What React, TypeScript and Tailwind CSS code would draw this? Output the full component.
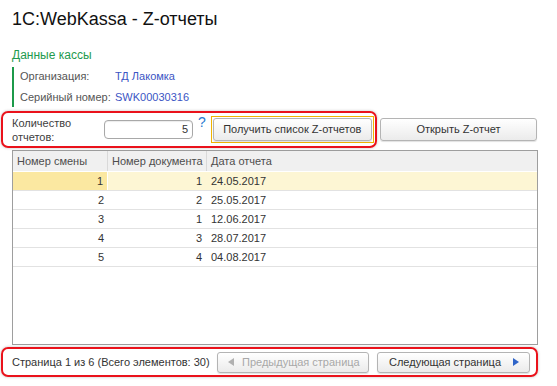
import React from "react";

const rows = [
  { shift: "1", doc: "1", date: "24.05.2017" },
  { shift: "2", doc: "2", date: "25.05.2017" },
  { shift: "3", doc: "1", date: "12.06.2017" },
  { shift: "4", doc: "3", date: "28.07.2017" },
  { shift: "5", doc: "4", date: "04.08.2017" },
];

const btn =
  "flex items-center justify-center rounded-[3px] border border-[#b4b4b4] bg-linear-to-b from-white to-[#ebebeb] shadow-[0_1px_1px_rgba(0,0,0,0.12)] text-[#333]";

const Arrow = ({ dir, color }: { dir: "left" | "right"; color: string }) => (
  <svg width="6" height="8" viewBox="0 0 6 8" className="shrink-0">
    {dir === "left" ? (
      <polygon points="6,0 6,8 0,4" fill={color} />
    ) : (
      <polygon points="0,0 0,8 6,4" fill={color} />
    )}
  </svg>
);

export default function App() {
  return (
    <div className="w-[557px] h-[386px] overflow-hidden bg-white font-['Liberation_Sans',Arial,sans-serif] text-[11px] text-[#404040]">
      <h1 className="pt-[9px] pl-[12px] text-[18px] leading-[21px] text-[#111]">
        1C:WebKassa - Z-отчеты
      </h1>

      <div className="mt-[18px] pl-[12px] text-[12px] leading-[14px] text-[#1e9a4e]">
        Данные кассы
      </div>
      <div className="ml-[12px] mt-[5px] flex flex-col gap-[2px] border-l-2 border-[#1c9a4a] pl-[6px]">
        <div className="flex h-[19px] items-center">
          <span className="w-[95px] text-[#555]">Организация:</span>
          <span className="text-[#3b55c4]">ТД Лакомка</span>
        </div>
        <div className="flex h-[19px] items-center">
          <span className="w-[95px] text-[#555]">Серийный номер:</span>
          <span className="text-[#3b55c4]">SWK00030316</span>
        </div>
      </div>

      <div className="mt-[4px] flex items-start">
        <div className="ml-[1px] flex h-[37px] w-[376px] items-center rounded-[7px] border-2 border-[#ea121b] pl-[9px] shadow-[0_0_3px_rgba(0,0,0,0.25)]">
          <span className="w-[92px] leading-[14px] text-[#404040]">
            Количество
            <br />
            отчетов:
          </span>
          <div className="flex h-[19px] w-[89px] items-center justify-end rounded-[4px] border border-[#a8a8a8] pr-[4px] text-[#333] shadow-[inset_0_1px_1px_rgba(0,0,0,0.08)]">
            5
          </div>
          <span className="ml-[5px] self-start mt-[1px] text-[14px] leading-[16px] text-[#2a7bd0]">?</span>
          <div className="ml-[5px] h-[27px] w-[163px] border border-[#f0b400] p-[1px]">
            <div className={`${btn} h-full w-full`}>Получить список Z-отчетов</div>
          </div>
        </div>
        <div className={`${btn} ml-[3px] mt-[7px] h-[23px] w-[157px]`}>Открыть Z-отчет</div>
      </div>

      <div className="ml-[12px] mt-[2px] h-[195px] w-[526px] border border-[#9e9e9e]">
        <div className="grid h-[21px] grid-cols-[95px_99px_1fr] border-b border-white bg-[#f0f0f0] text-[#4d4d4d]">
          <div className="flex items-center border-r border-[#d9d9d9] pl-[4px]">Номер смены</div>
          <div className="flex items-center border-r border-[#d9d9d9] pl-[4px]">Номер документа</div>
          <div className="flex items-center pl-[4px]">Дата отчета</div>
        </div>
        {rows.map((r, i) => (
          <div
            key={r.shift}
            className={`grid h-[19px] grid-cols-[95px_99px_1fr] border-b border-[#e2e2e2] text-[#333] ${
              i === 0 ? "bg-[#fdf6d4]" : "bg-white"
            }`}
          >
            <div
              className={`flex items-center justify-end pr-[4px] ${
                i === 0 ? "bg-[#fbe8a1] border-r border-white" : ""
              }`}
            >
              {r.shift}
            </div>
            <div className="flex items-center justify-end pr-[5px]">{r.doc}</div>
            <div className="flex items-center pl-[4px]">{r.date}</div>
          </div>
        ))}
      </div>

      <div className="ml-[1px] mt-[2px] flex h-[30px] w-[537px] items-center rounded-[7px] border-2 border-[#ea121b] pl-[9px] pr-[6px] shadow-[0_0_3px_rgba(0,0,0,0.25)]">
        <span className="text-[#333]">Страница 1 из 6 (Всего элементов: 30)</span>
        <div className="ml-auto flex gap-[8px]">
          <div className={`${btn} h-[21px] w-[152px] justify-start gap-[8px] pl-[10px] text-[#a8a8a8]`}>
            <Arrow dir="left" color="#b0b0b0" />
            Предыдущая страница
          </div>
          <div className={`${btn} h-[21px] w-[153px] justify-start pl-[11px] pr-[10px]`}>
            <span className="whitespace-nowrap">Следующая страница</span>
            <span className="ml-auto flex">
              <Arrow dir="right" color="#2f64c8" />
            </span>
          </div>
        </div>
      </div>
    </div>
  );
}
